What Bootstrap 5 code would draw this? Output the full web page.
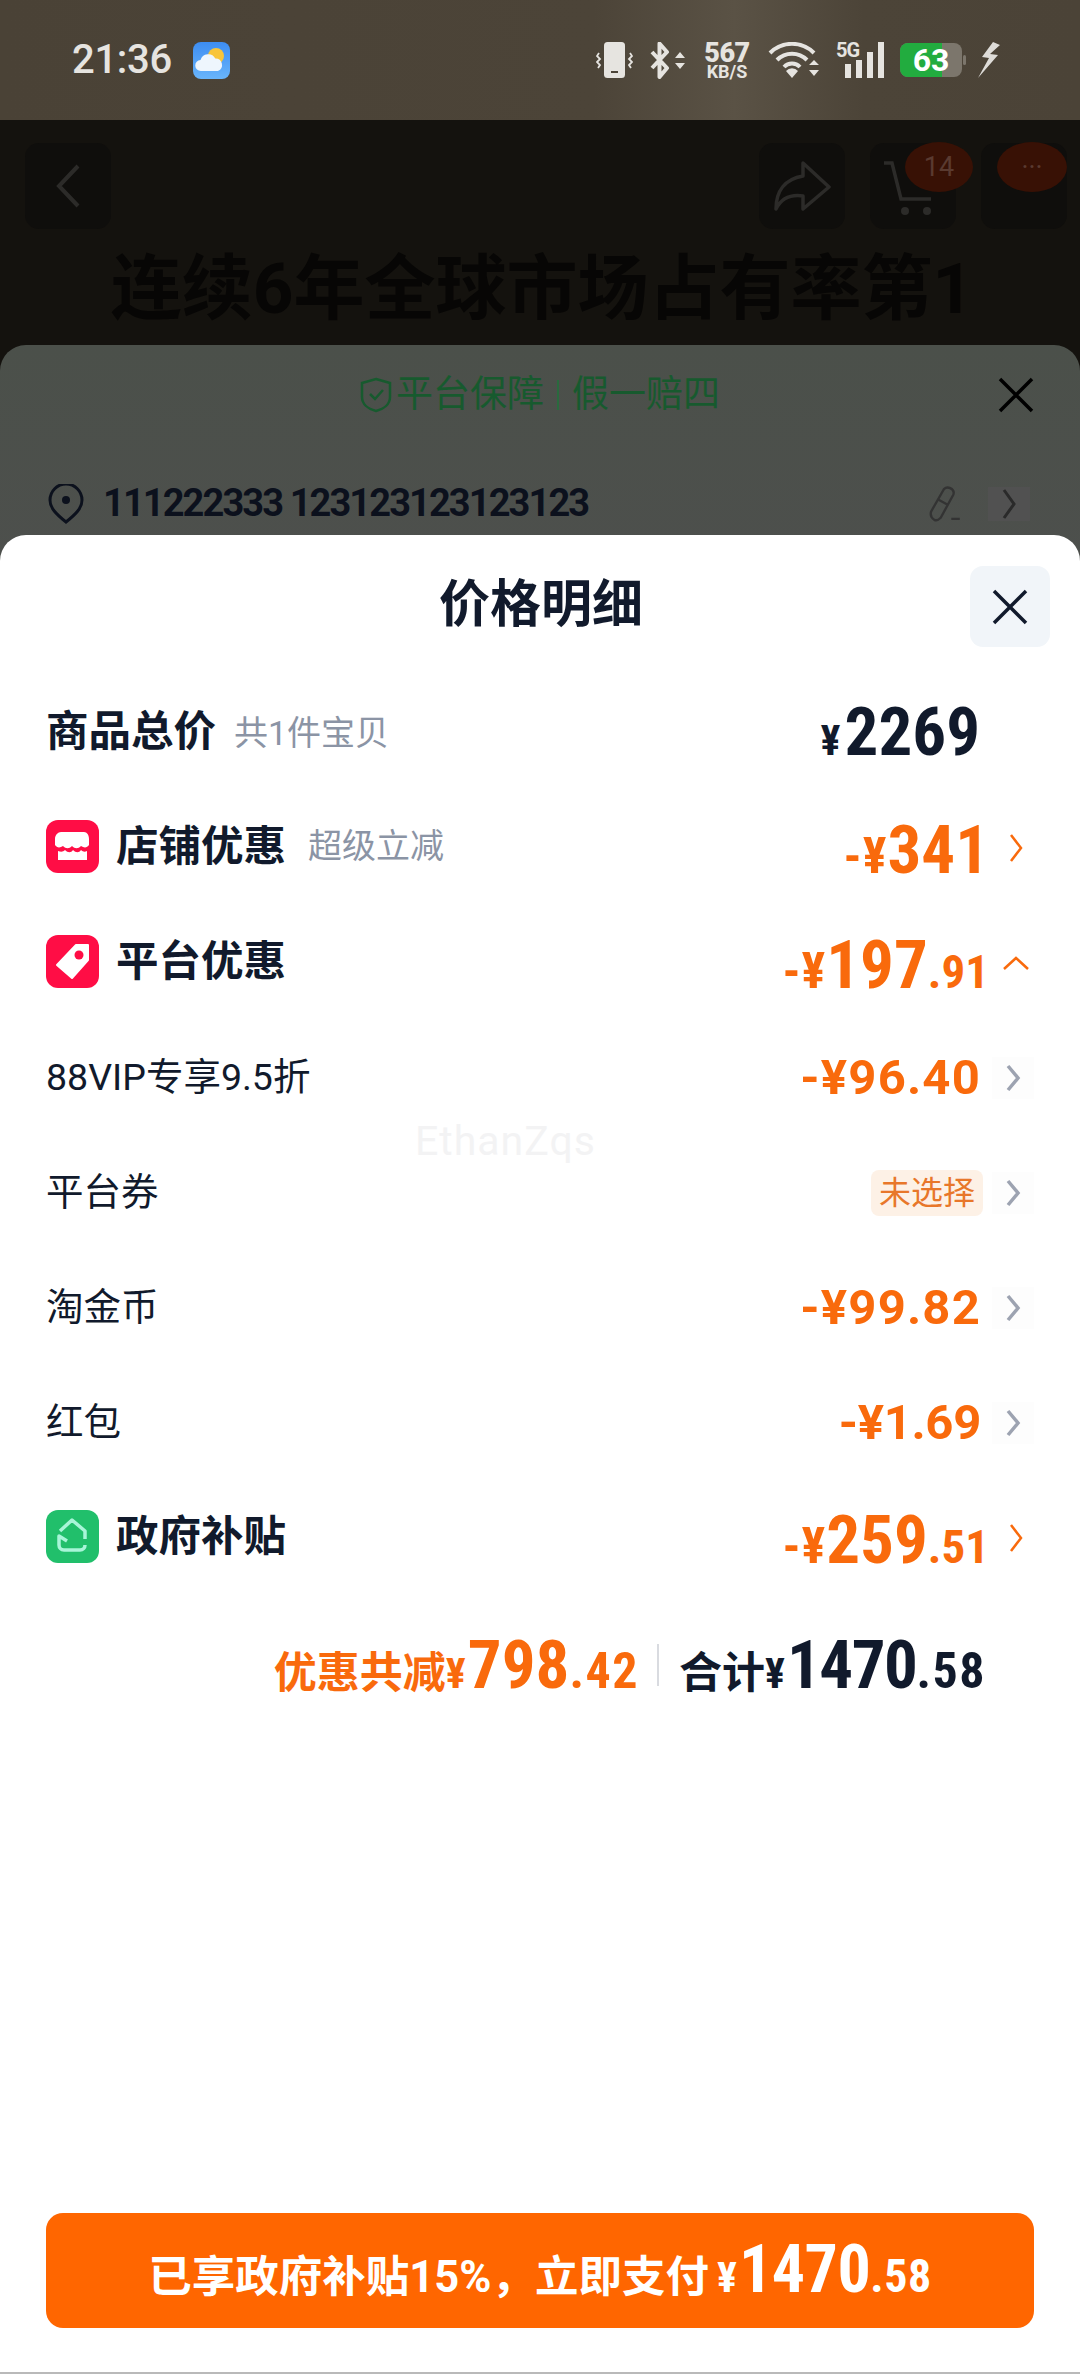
<!DOCTYPE html>
<html lang="zh">
<head>
<meta charset="UTF-8">
<meta name="viewport" content="width=device-width, initial-scale=1.0">
<title>价格明细</title>
<link href="https://cdn.jsdelivr.net/npm/bootstrap@5.3.3/dist/css/bootstrap.min.css" rel="stylesheet">
<style>
  html, body { margin: 0; background: #fff; }
  body { font-family: Roboto, "Noto Sans CJK SC", sans-serif; color: #111a2c; }
  .phone { position: relative; width: 1080px; height: 2374px; overflow: hidden; background: #14120e; }

  .statusbar { height: 120px; padding: 0 80px 0 72px; color: #e6e4e0;
    background: linear-gradient(90deg, #4a4236 0%, #4c4438 55%, #5a5245 68%, #4c4438 80%, #4b4337 100%); }
  .clock { font-size: 40px; font-weight: 500; letter-spacing: -.3px; line-height: 1; }
  .wxicon { margin-left: 21px; }
  .netspeed { width: 50px; font-weight: 700; text-align: center; }
  .netspeed b { display: block; font-size: 27px; line-height: 22px; letter-spacing: -.5px; }
  .netspeed i { display: block; font-style: normal; font-size: 18px; line-height: 15px; }
  .sig { position: relative; width: 48px; height: 36px; }
  .sig svg { display: block; }
  .sig span { position: absolute; left: 0; top: -2px; font-size: 20px; font-weight: 700; line-height: 20px; letter-spacing: -1px; }
  .batt { position: relative; width: 66px; height: 34px; }
  .batt span { position: absolute; inset: 0 0 0 -4px; color: #fff; font-weight: 700; font-size: 32px; line-height: 34px; text-align: center; }

  .bgnav { padding: 23px 13px 0 25px; }
  .bgbtn { width: 86px; height: 86px; border-radius: 14px; background: #0f0e0c; position: relative; }
  .bgbadge { position: absolute; top: -1px; background: #381105; border-radius: 50%; color: #5a3a30; font-size: 27px; }
  .bgtitle { font-size: 71px; font-weight: 700; color: #070605; text-align: center; line-height: 1; margin-top: 24px; margin-left: 4px; white-space: nowrap; }

  .midsheet { position: absolute; left: 0; right: 0; top: 345px; bottom: 0; border-radius: 26px 26px 0 0;
    background: linear-gradient(180deg, #4b504a 0%, #4f4f4f 22%, #4f4f4f 100%); }
  .guarantee { height: 100px; color: #175a2e; font-size: 37px; position: relative; }
  .guarantee u { text-decoration: none; width: 2px; height: 30px; background: #2a6a3e; margin: 0 13px; }
  .midx { position: absolute; left: 998px; top: 32px; }
  .addr { padding: 30px 50px 0 48px; font-size: 38px; font-weight: 700; color: #0c111d; letter-spacing: -1.9px; }
  .addr-num { margin-left: 19px; }
  .addr-chev { width: 42px; margin-left: 24px; background: #515151; }

  .pricesheet { position: absolute; left: 0; right: 0; top: 535px; bottom: 0; background: #fff; border-radius: 26px 26px 0 0; }
  .sheet-head { height: 140px; position: relative; }
  .sheet-title { font-size: 51px; font-weight: 700; margin-left: 2px; }
  .sheet-close { position: absolute; left: 970px; top: 31px; width: 80px; height: 81px; background: #f1f5f9; border-radius: 13px; padding: 0; border: 0; }

  .pricerow { height: 115px; padding: 0 46px 0 46px; }
  .rowicon { width: 53px; height: 53px; flex: none; margin-right: 17px; }
  .label-b { font-size: 42.5px; font-weight: 700; line-height: 1; }
  .label-r { font-size: 37.500px; line-height: 1; }
  .label-sub { font-size: 34px; line-height: 1; color: #8b94a5; margin-left: 18px; }
  .label-sub2 { margin-left: 22px; }
  .shift-up { margin-bottom: 3px; }

  .amt { color: #f96a0c; font-weight: 700; line-height: 1; white-space: nowrap; }
  .narrow { font-stretch: 80%; }
  .amt-big { font-size: 67px; }
  .amt-yen { font-size: 50px; letter-spacing: 1px; }
  .amt-dec { font-size: 47px; }
  .amt-mid { font-size: 49px; letter-spacing: 1.2px; }
  .amt-tight { letter-spacing: -.3px; }
  .amt-dark { color: #111a2c; }
  .amt-yen-s { font-size: 42px; }
  .amt-drop { margin-top: 6px; }
  .chevbox { width: 45px; height: 42px; flex: none; padding-left: 8px; }
  .chevbox-g { background: #fdfdfd; margin-left: 11px; width: 42px; padding-left: 0; }
  .unchosen { background: #fdf1e6; color: #e8772a; font-size: 32px; border-radius: 8px; padding: 4px 8px; line-height: 38px; margin-right: -2px; }

  .watermark { position: absolute; left: 415px; top: 576px; font-size: 41px; color: #f3f3f4; letter-spacing: 1px; }

  .sumrow { height: 140px; padding-right: 94px; }
  .sum-cn { font-size: 43px; font-weight: 700; line-height: 1; }
  .sum-yen { font-size: 42px; font-weight: 700; margin-right: 2px; }
  .sum-dec { font-size: 50px; letter-spacing: 1.5px; }
  .sum-tot { letter-spacing: -1.5px; }
  .sum-line { width: 2px; height: 42px; background: #d9dbe0; margin: 0 20px 0 18px; }

  .paywrap { position: absolute; left: 46px; right: 46px; top: 1678px; }
  .paybtn { height: 115px; width: 100%; border-radius: 17px; background: #ff6600; border: 0; color: #fff; font-weight: 700; font-size: 43.500px; line-height: 1; white-space: nowrap; }
  .paybtn .big { font-size: 66px; letter-spacing: -.5px; }
  .paybtn .dec { font-size: 46px; letter-spacing: .5px; }
  .paybtn .yen { font-size: 42px; margin: 0 2px 0 8px; }
  .homeline { position: absolute; left: 0; right: 0; bottom: 0; height: 2px; background: #b9b9b9; }
</style>
</head>
<body>
<div class="phone">

  <!-- status bar -->
  <div class="statusbar d-flex align-items-center justify-content-between">
    <div class="d-flex align-items-center">
      <span class="clock">21:36</span>
      <svg width="37" height="37" viewBox="0 0 37 37" class="wxicon">
        <defs><linearGradient id="wx" x1="0" y1="0" x2="0" y2="1"><stop offset="0" stop-color="#3d8df2"/><stop offset="1" stop-color="#69b5fb"/></linearGradient></defs>
        <rect width="37" height="37" rx="8" fill="url(#wx)"/>
        <circle cx="23" cy="14" r="8" fill="#f8c53a"/>
        <path d="M8 29a5.5 5.5 0 0 1-.5-11 8 8 0 0 1 14.8-1.500 6.500 6.500 0 0 1 2.700 12.500z" fill="#eef6fd"/>
      </svg>
    </div>
    <div class="d-flex align-items-center" style="gap:16px">
      <svg width="37" height="37" viewBox="0 0 37 37">
        <rect x="8" y="0" width="21" height="36" rx="3.500" fill="#e6e4e0"/>
        <rect x="15" y="29" width="7" height="2" fill="#4c4438"/>
        <path d="M3 11l-2 3 3 3-3 3 3 3-2 3M34 11l2 3-3 3 3 3-3 3 2 3" fill="none" stroke="#e6e4e0" stroke-width="1.800"/>
      </svg>
      <svg width="37" height="37" viewBox="0 0 37 37">
        <path d="M3 10l15 16-7.500 9V1.500L18 10 3 26" fill="none" stroke="#e6e4e0" stroke-width="4" stroke-linejoin="round"/>
        <path d="M26 16l5-6 5 6zM26 21l5 6 5-6z" fill="#e6e4e0"/>
      </svg>
      <div class="netspeed"><b>567</b><i>KB/S</i></div>
      <svg width="52" height="36" viewBox="0 0 52 36">
        <path d="M2 11a31 31 0 0 1 44 0M9 18a21 21 0 0 1 30 0M16 25a11 11 0 0 1 16 0" fill="none" stroke="#e6e4e0" stroke-width="4"/>
        <path d="M24 36l-6-7a8 8 0 0 1 12 0z" fill="#e6e4e0"/>
        <path d="M41 23l5-5 5 5zM41 28l5 6 5-6z" fill="#e6e4e0"/>
      </svg>
      <div class="sig">
        <svg width="48" height="36" viewBox="0 0 48 36">
          <rect x="9" y="22" width="6" height="14" fill="#e6e4e0"/>
          <rect x="20" y="18" width="6" height="18" fill="#e6e4e0"/>
          <rect x="31" y="10" width="6" height="26" fill="#e6e4e0"/>
          <rect x="42" y="0" width="6" height="36" fill="#e6e4e0"/>
        </svg>
        <span>5G</span>
      </div>
      <div class="batt">
        <svg width="66" height="34" viewBox="0 0 66 34">
          <rect x="0" y="0" width="62" height="34" rx="8" fill="#7c766c"/>
          <path d="M8 0h34v34H8a8 8 0 0 1-8-8V8a8 8 0 0 1 8-8z" fill="#22ac3f"/>
          <rect x="63" y="12" width="3" height="10" rx="1.500" fill="#7c766c"/>
        </svg>
        <span>63</span>
      </div>
      <svg width="22" height="36" viewBox="0 0 22 36" style="margin-left:-4px"><path d="M15 0L4 15l7 1-11 20 20-23-8-1 10-9z" fill="#dedcd8"/></svg>
    </div>
  </div>

  <!-- page behind the sheets -->
  <div class="bgnav d-flex justify-content-between">
    <div class="bgbtn d-flex align-items-center justify-content-center">
      <svg width="26" height="46" viewBox="0 0 26 46"><path d="M23 3L4 23l19 20" fill="none" stroke="#2c2b29" stroke-width="4"/></svg>
    </div>
    <div class="d-flex" style="gap:25px">
      <div class="bgbtn d-flex align-items-center justify-content-center">
        <svg width="58" height="50" viewBox="0 0 58 50"><path d="M30 2l26 24-26 22V35C16 33 8 38 3 48 3 30 12 18 30 15z" fill="none" stroke="#2c2b29" stroke-width="3.500" stroke-linejoin="round"/></svg>
      </div>
      <div class="bgbtn">
        <svg width="60" height="60" viewBox="0 0 60 60" class="position-absolute" style="left:12px;top:18px"><path d="M2 2h8l9 36h30" fill="none" stroke="#2c2b29" stroke-width="3.500"/><circle cx="23" cy="50" r="4" fill="#2c2b29"/><circle cx="45" cy="50" r="4" fill="#2c2b29"/></svg>
        <div class="bgbadge d-flex align-items-center justify-content-center" style="left:35px;width:68px;height:50px">14</div>
      </div>
      <div class="bgbtn">
        <div class="bgbadge d-flex align-items-center justify-content-center" style="left:16px;width:70px;height:50px">···</div>
      </div>
    </div>
  </div>
  <div class="bgtitle">连续6年全球市场占有率第1</div>

  <!-- order sheet, dimmed -->
  <div class="midsheet">
    <div class="guarantee d-flex align-items-center justify-content-center">
      <svg width="32" height="36" viewBox="0 0 32 36" class="me-1"><path d="M16 2l14 4v14c0 7-6 12-14 14C8 32 2 27 2 20V6z" fill="none" stroke="#175a2e" stroke-width="2.500"/><path d="M10 17l5 5 8-9" fill="none" stroke="#175a2e" stroke-width="2.500"/></svg>
      <span>平台保障</span><u></u><span>假一赔四</span>
      <svg class="midx" width="36" height="36" viewBox="0 0 36 36"><path d="M2 2l32 32M34 2L2 34" stroke="#000" stroke-width="3.500"/></svg>
    </div>
    <div class="addr d-flex align-items-center">
      <svg width="36" height="40" viewBox="0 0 36 40"><path d="M18 38C8 30 2 24 2 16a16 16 0 0 1 32 0c0 8-6 14-16 22z" fill="none" stroke="#0c111d" stroke-width="3"/><circle cx="18" cy="16" r="4" fill="#0c111d"/></svg>
      <span class="addr-num flex-grow-1">111222333 123123123123123</span>
      <svg width="36" height="36" viewBox="0 0 34 34"><path d="M6 32c-3-2-4-5-3-8L15 3c2-2 4-2 6-1s4 3 3 6L12 30c-2 2-4 3-6 2zM10 13l9 5M22 31h8" fill="none" stroke="#333" stroke-width="2.200"/></svg>
      <div class="addr-chev d-flex justify-content-center">
        <svg width="16" height="34" viewBox="0 0 16 34"><path d="M3 3l10 14L3 31" fill="none" stroke="#2a2a2a" stroke-width="3"/></svg>
      </div>
    </div>
  </div>

  <!-- price detail sheet -->
  <div class="pricesheet">
    <div class="sheet-head d-flex align-items-center justify-content-center">
      <div class="sheet-title">价格明细</div>
      <button type="button" class="sheet-close d-flex align-items-center justify-content-center" aria-label="关闭">
        <svg width="36" height="36" viewBox="0 0 36 36"><path d="M2 2l32 32M34 2L2 34" stroke="#111a2c" stroke-width="3.500"/></svg>
      </button>
    </div>

    <div class="pricerow d-flex align-items-center">
      <span class="label-b">商品总价</span><span class="label-sub">共1件宝贝</span>
      <div class="ms-auto d-flex align-items-baseline" style="margin-right:54px">
        <span class="amt amt-dark narrow amt-yen-s me-1">¥</span><span class="amt amt-dark narrow amt-big">2269</span>
      </div>
    </div>

    <div class="pricerow d-flex align-items-center">
      <svg class="rowicon shift-up" viewBox="0 0 53 53">
        <rect width="53" height="53" rx="12" fill="#ff0d45"/>
        <path d="M15 12h23c3 0 5 3 5 7v6c-2 3-5 3-8 1-3 3-6 3-9 0-3 3-6 3-9 0-3 2-6 2-8-1v-6c0-4 3-7 6-7z" fill="#fff"/>
        <path d="M12 31c3 1 5 1 7-1 3 3 6 3 8 0 3 3 6 3 8 0 2 2 4 2 6 1v9H12z" fill="#fff"/>
      </svg>
      <span class="label-b">店铺优惠</span><span class="label-sub label-sub2 shift-up">超级立减</span>
      <div class="ms-auto d-flex align-items-center">
        <span class="amt amt-drop narrow"><span class="amt-yen">-¥</span><span class="amt-big">341</span></span>
        <span class="chevbox d-flex align-items-center justify-content-center">
          <svg width="14" height="30" viewBox="0 0 14 30"><path d="M2 2l10 13L2 28" fill="none" stroke="#f96a0c" stroke-width="2.500"/></svg>
        </span>
      </div>
    </div>

    <div class="pricerow d-flex align-items-center">
      <svg class="rowicon shift-up" viewBox="0 0 53 53">
        <rect width="53" height="53" rx="12" fill="#ff0d45"/>
        <path d="M30 10h12v15L26 43 11 30z" fill="#fff" stroke="#fff" stroke-width="2" stroke-linejoin="round"/>
        <circle cx="33" cy="20" r="4.500" fill="#ff0d45"/>
      </svg>
      <span class="label-b">平台优惠</span>
      <div class="ms-auto d-flex align-items-center">
        <span class="amt amt-drop narrow"><span class="amt-yen">-¥</span><span class="amt-big">197</span><span class="amt-dec">.91</span></span>
        <span class="chevbox d-flex align-items-center justify-content-center">
          <svg width="28" height="16" viewBox="0 0 28 16"><path d="M2 14L14 3l12 11" fill="none" stroke="#f96a0c" stroke-width="2.500"/></svg>
        </span>
      </div>
    </div>

    <div class="pricerow d-flex align-items-center">
      <span class="label-r">88VIP专享9.5折</span>
      <div class="ms-auto d-flex align-items-center">
        <span class="amt amt-mid">-¥96.40</span>
        <span class="chevbox chevbox-g d-flex align-items-center justify-content-center">
          <svg width="16" height="28" viewBox="0 0 16 28"><path d="M3 2l10 12L3 26" fill="none" stroke="#9da3b1" stroke-width="3.500"/></svg>
        </span>
      </div>
    </div>

    <div class="pricerow d-flex align-items-center">
      <span class="label-r">平台券</span>
      <div class="ms-auto d-flex align-items-center">
        <span class="unchosen">未选择</span>
        <span class="chevbox chevbox-g d-flex align-items-center justify-content-center">
          <svg width="16" height="28" viewBox="0 0 16 28"><path d="M3 2l10 12L3 26" fill="none" stroke="#9da3b1" stroke-width="3.500"/></svg>
        </span>
      </div>
    </div>

    <div class="pricerow d-flex align-items-center">
      <span class="label-r">淘金币</span>
      <div class="ms-auto d-flex align-items-center">
        <span class="amt amt-mid">-¥99.82</span>
        <span class="chevbox chevbox-g d-flex align-items-center justify-content-center">
          <svg width="16" height="28" viewBox="0 0 16 28"><path d="M3 2l10 12L3 26" fill="none" stroke="#9da3b1" stroke-width="3.500"/></svg>
        </span>
      </div>
    </div>

    <div class="pricerow d-flex align-items-center">
      <span class="label-r">红包</span>
      <div class="ms-auto d-flex align-items-center">
        <span class="amt amt-mid amt-tight">-¥1.69</span>
        <span class="chevbox chevbox-g d-flex align-items-center justify-content-center">
          <svg width="16" height="28" viewBox="0 0 16 28"><path d="M3 2l10 12L3 26" fill="none" stroke="#9da3b1" stroke-width="3.500"/></svg>
        </span>
      </div>
    </div>

    <div class="pricerow d-flex align-items-center">
      <svg class="rowicon shift-up" viewBox="0 0 53 53">
        <rect width="53" height="53" rx="12" fill="#21bf6b"/>
        <path d="M14 21L26 10l13 11v8M39 35c0 3-2 5-5 5H18c-3 0-5-2-5-5v-9l8 5" fill="none" stroke="#a8f5d8" stroke-width="3.500" stroke-linejoin="round"/>
      </svg>
      <span class="label-b">政府补贴</span>
      <div class="ms-auto d-flex align-items-center">
        <span class="amt amt-drop narrow"><span class="amt-yen">-¥</span><span class="amt-big">259</span><span class="amt-dec">.51</span></span>
        <span class="chevbox d-flex align-items-center justify-content-center">
          <svg width="14" height="30" viewBox="0 0 14 30"><path d="M2 2l10 13L2 28" fill="none" stroke="#f96a0c" stroke-width="2.500"/></svg>
        </span>
      </div>
    </div>

    <div class="sumrow d-flex align-items-center justify-content-end">
      <div class="d-flex align-items-baseline">
        <span class="sum-cn amt">优惠共减</span><span class="amt narrow sum-yen">¥</span><span class="amt narrow amt-big">798</span><span class="amt narrow sum-dec">.42</span>
      </div>
      <span class="sum-line"></span>
      <div class="d-flex align-items-baseline">
        <span class="sum-cn amt amt-dark">合计</span><span class="amt amt-dark narrow sum-yen">¥</span><span class="amt amt-dark narrow amt-big sum-tot">1470</span><span class="amt amt-dark narrow sum-dec">.58</span>
      </div>
    </div>

    <div class="watermark">EthanZqs</div>

    <div class="paywrap">
      <button type="button" class="btn paybtn d-flex align-items-baseline justify-content-center pt-4">
        <span>已享政府补贴15%，立即支付</span><span class="yen narrow">¥</span><span class="big narrow">1470</span><span class="dec narrow">.58</span>
      </button>
    </div>
  </div>
  <div class="homeline"></div>
</div>
<script src="https://cdn.jsdelivr.net/npm/bootstrap@5.3.3/dist/js/bootstrap.bundle.min.js"></script>
</body>
</html>
